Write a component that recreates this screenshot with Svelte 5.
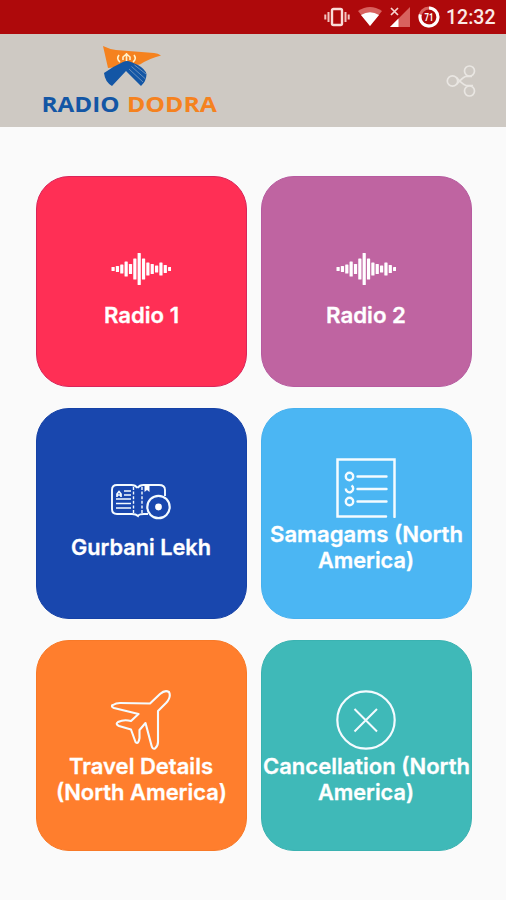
<script>
	const tiles = [
		{ icon: 'wave', color: '#ff2f55', edge: '#d9245a', lines: [{ text: 'Radio 1', width: 75 }] },
		{ icon: 'wave', color: '#bf64a1', edge: '#b75ba0', lines: [{ text: 'Radio 2', width: 80 }] },
		{ icon: 'book', color: '#1947ae', edge: '#1541a6', lines: [{ text: 'Gurbani Lekh', width: 140 }] },
		{
			icon: 'list',
			color: '#4bb6f3',
			edge: '#47b1ef',
			lines: [
				{ text: 'Samagams (North', width: 193 },
				{ text: 'America)', width: 96 }
			]
		},
		{
			icon: 'plane',
			color: '#ff7e2d',
			edge: '#f87927',
			lines: [
				{ text: 'Travel Details', width: 144 },
				{ text: '(North America)', width: 171 }
			]
		},
		{
			icon: 'cancel',
			color: '#3fb9b8',
			edge: '#3ab2b1',
			lines: [
				{ text: 'Cancellation (North', width: 207 },
				{ text: 'America)', width: 96 }
			]
		}
	];

	// bar heights of the sound wave, left to right
	const bars = [4, 6, 9, 15, 10, 21, 32, 21, 13, 10, 7, 13, 8, 4];
</script>

<div class="screen">
	<div class="status">
		<svg class="vibrate" width="26" height="20" viewBox="0 0 26 20">
			<rect x="8" y="2" width="10" height="16" rx="1.5" fill="none" stroke="#f9dcd8" stroke-width="2.4" />
			<path d="M4.5 5v10M21.5 5v10M1.3 7.5v5M24.7 7.5v5" stroke="#f3c4bf" stroke-width="2" />
		</svg>
		<svg class="wifi" width="24" height="20" viewBox="0 0 24 20">
			<path d="M0 4Q12-4 24 4L12 19Z" fill="#d8625f" />
			<path d="M3 8Q12 2.5 21 8L12 19Z" fill="#fff" />
		</svg>
		<svg class="signal" width="20" height="20" viewBox="0 0 20 20">
			<path d="M20 0v20H0Z" fill="#d8625f" />
			<path d="M8.5 11.5V20H0Z" fill="#fff" />
			<path d="M1 1l7 7M8 1L1 8" stroke="#f6d5cf" stroke-width="1.7" />
		</svg>
		<svg class="battery" width="22" height="22" viewBox="0 0 22 22">
			<circle cx="11" cy="11" r="9" fill="none" stroke="#d8625f" stroke-width="3" />
			<path d="M11 2a9 9 0 1 1-8.7 6.5" fill="none" stroke="#fff" stroke-width="3" />
			<text x="11" y="14.5" text-anchor="middle" textLength="9" lengthAdjust="spacingAndGlyphs">71</text>
		</svg>
		<span class="clock">12:32</span>
	</div>

	<header>
		<svg class="logo" width="180" height="72" viewBox="0 0 180 72">
			<path d="M63 1Q69 4 76 5l38 3q4 0 7 2.500q-12 3-21 9L68 23Z" fill="#f5821f" />
			<path
				d="M80 17q-4-3-1-7M93 17q4-3 1-7M83 15v-3l3.500-3 3.500 3v3M86.500 8v8"
				fill="none"
				stroke="#fff0c9"
				stroke-width="1.6"
			/>
			<path
				d="M64 28Q72 22 83 17q4-2 8 0l7 3q7 4 8.500 9q0 7-5.500 12L86 26 72 41q-7-4-8-13Z"
				fill="#1356a5"
			/>
			<path d="M89 24l14 13M91.500 21.500l13.500 12M94.500 20l11.500 9" stroke="#7f9dc0" stroke-width="0.8" />
			<text class="radio" x="1.500" y="67" textLength="78" lengthAdjust="spacingAndGlyphs">RADIO</text>
			<text class="dodra" x="87" y="67" textLength="90" lengthAdjust="spacingAndGlyphs">DODRA</text>
		</svg>
		<svg class="share" width="32" height="34" viewBox="0 0 32 34">
			<circle cx="7.500" cy="17" r="5.2" />
			<circle cx="24.500" cy="7" r="5" />
			<circle cx="24.500" cy="27" r="5" />
			<path d="M11.500 13.500Q17 20 21 21.500H28M11.500 20.500Q17 14 20.500 12.500H27" />
		</svg>
	</header>

	<main>
		{#each tiles as tile}
			<button class="tile" style={`background: ${tile.color}; border-color: ${tile.edge}`}>
				<svg class="icon" width="60" height="60" viewBox="0 0 60 60">
					{#if tile.icon === 'wave'}
						{#each bars as height, i}
							<rect x={0.5 + i * 4.35} y={30 - height / 2} width="3.2" {height} rx="0.6" fill="#fff" />
						{/each}
					{:else if tile.icon === 'book'}
						<path
							d="M26.500 17q-2-3-6-3H6q-5 0-5 5v19q0 5 5 5h15q4 0 6 2q1-2 6-2h4M26.500 17q2-3 6-3H48q6 0 6 5v6"
							stroke-width="1.9"
						/>
						<path d="M13 20h7M13 24h7M5 28h15M5 32.500h15M5 37h15" stroke-width="1.5" />
						<path d="M6 26v-3l2-2.500 2 2.500v3M6 24h4" stroke-width="1.7" />
						<path d="M22.500 16v26M31 16v26" stroke-width="1.4" stroke-dasharray="3 1.6" />
						<path d="M33.500 14h5v7l-2.500-2-2.500 2Z" fill="#fff" stroke="none" />
						<circle cx="47.500" cy="36" r="11.2" fill="#1947ae" stroke-width="2.2" />
						<circle cx="47.500" cy="36" r="3.4" fill="#fff" stroke="none" />
					{:else if tile.icon === 'list'}
						<path d="M50 58.500H1.500v-57h57V59" stroke-width="2.5" stroke-linecap="round" />
						<path d="M21.500 18.500h29M21.500 31h29M21.500 43.500h29" stroke-width="2.4" stroke-linecap="round" />
						<circle cx="13.500" cy="18.500" r="3.7" stroke-width="2.4" />
						<path d="M15.500 27.500a3.7 3.7 0 1 1-5.700 3" stroke-width="2.4" />
						<circle cx="13.500" cy="43.500" r="3.7" stroke-width="2.4" />
					{:else if tile.icon === 'plane'}
						<path
							d="M39 13.500L49 4Q54-.5 58 2Q60.500 7 55 13L47 21V52q0 4-3 6.500q-2.500 1-3.500-3L34.500 33 28.500 40v8q-1 7-4 4L20 39.500 8 36q-4-2-1-4q6-3 13-1l7.500-7L3 18q-4-2-1-3q3-2 7-2Z"
							stroke-width="2.100"
							stroke-linejoin="round"
						/>
					{:else}
						<circle cx="30" cy="30" r="28.700" stroke-width="2.200" />
						<path d="M18.500 19l22.500 22.500M41 19L18.500 41.500" stroke-width="2" />
					{/if}
				</svg>
				<span class="label">
					{#each tile.lines as line}
						<svg width={line.width} height="26">
							<text x="0" y="20.5" textLength={line.width} lengthAdjust="spacingAndGlyphs">{line.text}</text>
						</svg>
					{/each}
				</span>
			</button>
		{/each}
	</main>
</div>

<style>
	:global(body) {
		background: #fafafa;
	}

	.screen {
		width: 506px;
		height: 900px;
		overflow: hidden;
		background: #fafafa;
	}

	.status {
		display: flex;
		align-items: center;
		box-sizing: border-box;
		height: 34px;
		padding-left: 324px;
		background: #ae090b;
	}

	.wifi {
		margin-left: 8px;
	}

	.signal {
		margin: 0 8px;
	}

	.battery text {
		font: bold 10px Roboto, sans-serif;
		fill: #fff;
	}

	.clock {
		margin-left: 6px;
		color: #fbeae6;
		font: 500 19.5px Roboto, sans-serif;
	}

	header {
		display: flex;
		align-items: center;
		justify-content: space-between;
		box-sizing: border-box;
		height: 93px;
		padding: 0 29px 0 40px;
		background: #cec9c3;
	}

	.logo text {
		font: bold 21.5px 'Open Sans', sans-serif;
	}

	.radio {
		fill: #1356a5;
	}

	.dodra {
		fill: #f5821f;
	}

	.share {
		fill: none;
		stroke: #e9e6e2;
		stroke-width: 1.7;
	}

	main {
		display: grid;
		grid-template-columns: 211px 211px;
		grid-auto-rows: 211px;
		gap: 21px 14px;
		padding: 49px 0 0 36px;
	}

	.tile {
		display: flex;
		flex-direction: column;
		align-items: center;
		justify-content: center;
		box-sizing: border-box;
		padding: 3px 1px 0 0;
		border: 1px solid;
		border-radius: 33px;
		color: #fff;
	}

	.icon {
		flex: none;
		fill: none;
		stroke: #f4fbff;
		margin-bottom: 3px;
	}

	.icon rect {
		stroke: none;
	}

	.label {
		display: flex;
		flex-direction: column;
		align-items: center;
	}

	.label svg {
		display: block;
		overflow: visible;
	}

	.label text {
		font: 600 22px Inter, sans-serif;
		fill: #fff;
		stroke: #fff;
		stroke-width: 0.3;
	}
</style>
